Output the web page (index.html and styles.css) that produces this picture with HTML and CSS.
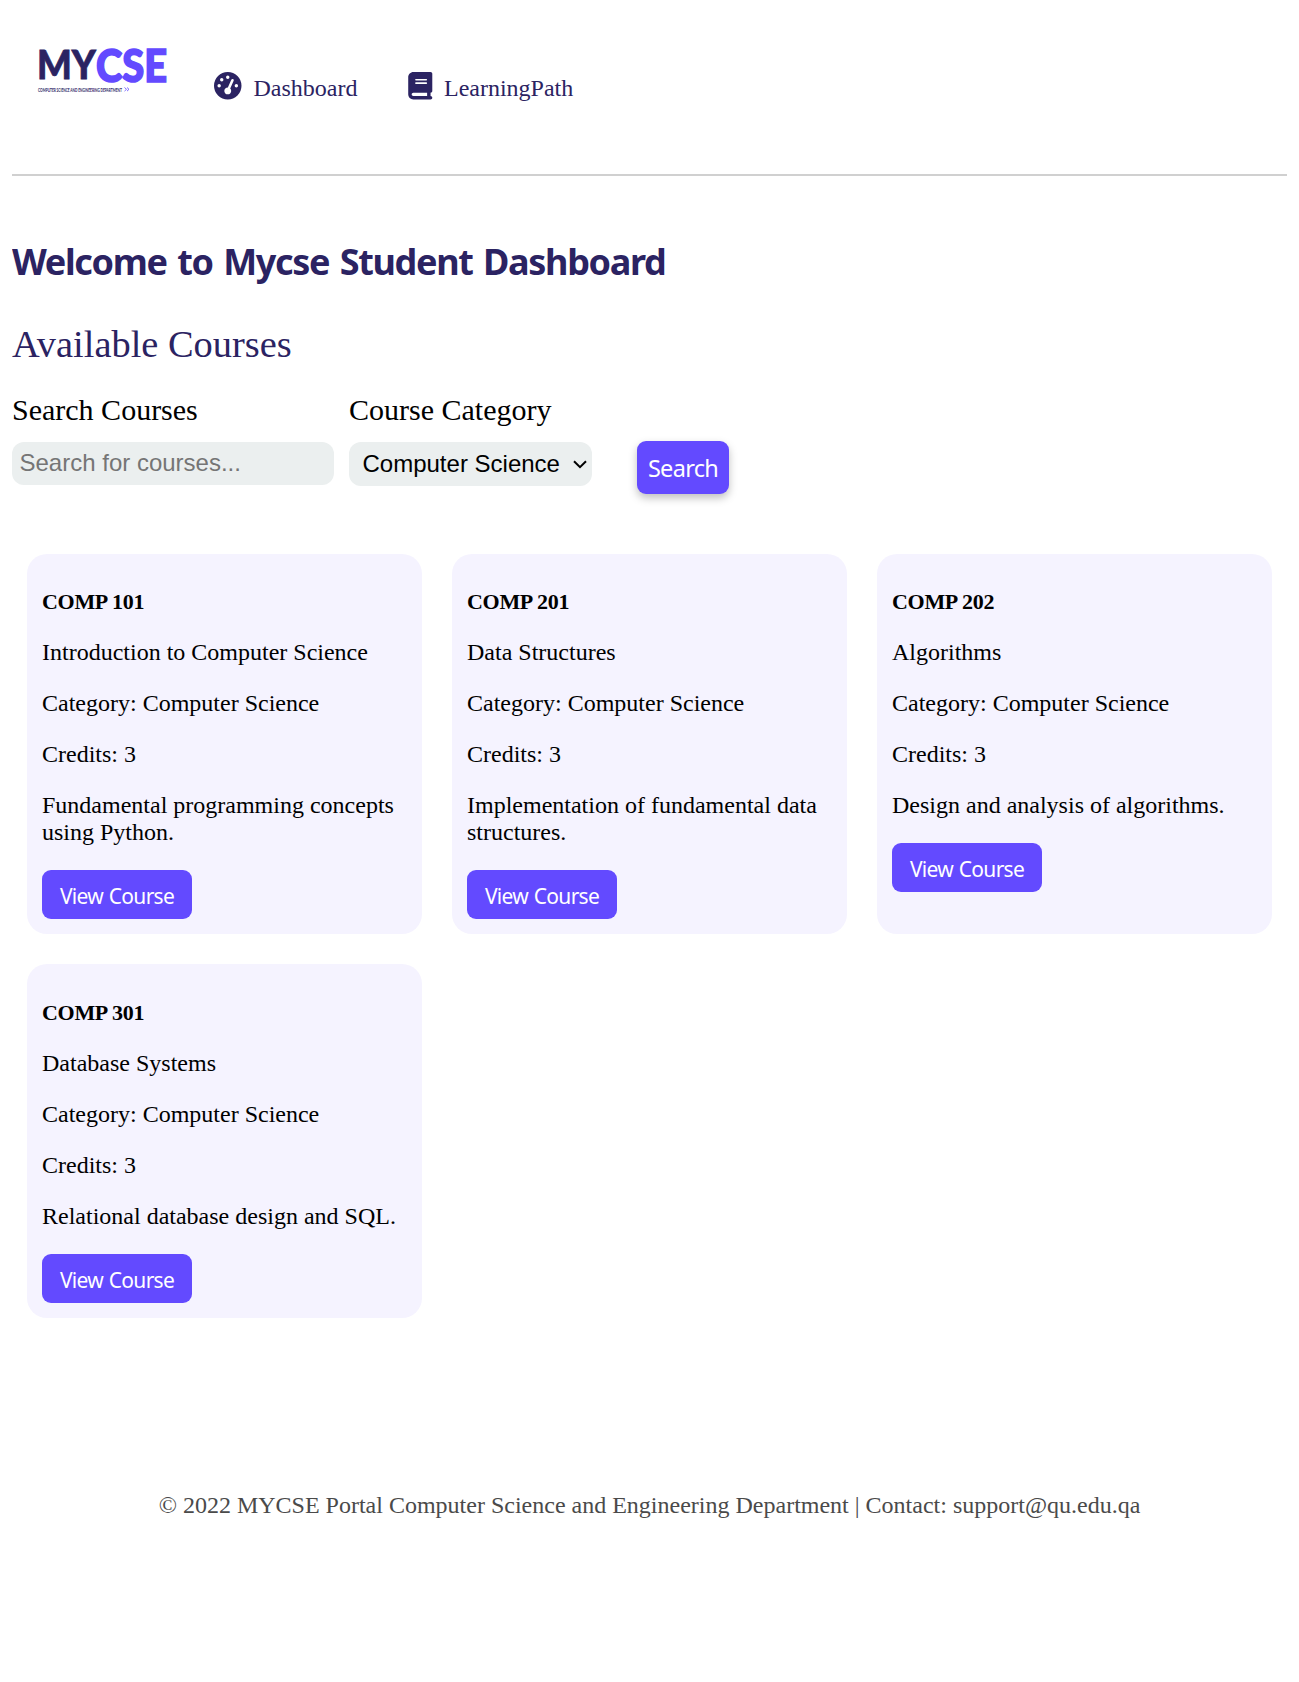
FILE: index.html
```html
<!DOCTYPE html>
<html lang="en">
<head>
<meta charset="utf-8">
<title>MYCSE Portal</title>
<link rel="stylesheet" href="styles.css">
</head>
<body>
<header class="header">
  <svg class="logo" viewBox="0 0 140 50" role="img" aria-label="MYCSE">
    <text class="logo-my" x="4" y="36" textLength="59" lengthAdjust="spacingAndGlyphs">MY</text>
    <text class="logo-cse" x="63" y="39" textLength="71" lengthAdjust="spacingAndGlyphs">CSE</text>
    <text class="logo-sub" x="5" y="48.5" textLength="84" lengthAdjust="spacingAndGlyphs">COMPUTER SCIENCE AND ENGINEERING DEPARTMENT</text>
    <path class="logo-mark" d="M91.500 44.500l2 1.800-2 1.800M94 44.500l2 1.800-2 1.800"/>
  </svg>
  <nav class="nav">
    <a class="nav-link">
      <svg class="icon icon-gauge" viewBox="0 0 512 512"><path d="M0 256a256 256 0 1 1 512 0A256 256 0 1 1 0 256zM288 96a32 32 0 1 0-64 0 32 32 0 1 0 64 0zM256 416c35.300 0 64-28.700 64-64 0-17.400-6.900-33.100-18.100-44.600L366 161.700c5.300-12.100-.2-26.300-12.300-31.600s-26.300.2-31.600 12.300L257.900 288c-.6 0-1.300 0-1.900 0-35.300 0-64 28.700-64 64s28.700 64 64 64zM176 144a32 32 0 1 0-64 0 32 32 0 1 0 64 0zM96 288a32 32 0 1 0 0-64 32 32 0 1 0 0 64zm352-32a32 32 0 1 0-64 0 32 32 0 1 0 64 0z"/></svg>
      <span>Dashboard</span>
    </a>
    <a class="nav-link">
      <svg class="icon icon-book" viewBox="0 0 448 512"><path d="M96 0C43 0 0 43 0 96v320c0 53 43 96 96 96h320c17.700 0 32-14.300 32-32s-14.300-32-32-32v-64c17.700 0 32-14.300 32-32V32c0-17.700-14.300-32-32-32H96zm0 384h256v64H96c-17.700 0-32-14.300-32-32s14.300-32 32-32zm32-240c0-8.800 7.200-16 16-16h192c8.800 0 16 7.200 16 16s-7.200 16-16 16H144c-8.800 0-16-7.200-16-16zm16 48h192c8.800 0 16 7.200 16 16s-7.200 16-16 16H144c-8.800 0-16-7.200-16-16s7.200-16 16-16z"/></svg>
      <span>LearningPath</span>
    </a>
  </nav>
</header>
<main>
  <h1 class="title">Welcome to Mycse Student Dashboard</h1>
  <h2 class="subtitle">Available Courses</h2>
  <form class="search">
    <div class="field">
      <label class="label" for="q">Search Courses</label>
      <input class="input" id="q" type="text" placeholder="Search for courses...">
    </div>
    <div class="field">
      <label class="label" for="cat">Course Category</label>
      <div class="select" id="cat">
        <span>Computer Science</span>
        <svg class="chevron" viewBox="0 0 14 9"><path d="M1 1.200l6 6 6-6"/></svg>
      </div>
    </div>
    <button class="search-button" type="button">Search</button>
  </form>
  <section class="courses">
    <article class="card">
      <h4 class="code">COMP 101</h4>
      <p>Introduction to Computer Science</p>
      <p>Category: Computer Science</p>
      <p>Credits: 3</p>
      <p>Fundamental programming concepts using Python.</p>
      <button class="view" type="button">View Course</button>
    </article>
    <article class="card">
      <h4 class="code">COMP 201</h4>
      <p>Data Structures</p>
      <p>Category: Computer Science</p>
      <p>Credits: 3</p>
      <p>Implementation of fundamental data structures.</p>
      <button class="view" type="button">View Course</button>
    </article>
    <article class="card">
      <h4 class="code">COMP 202</h4>
      <p>Algorithms</p>
      <p>Category: Computer Science</p>
      <p>Credits: 3</p>
      <p>Design and analysis of algorithms.</p>
      <button class="view" type="button">View Course</button>
    </article>
    <article class="card">
      <h4 class="code">COMP 301</h4>
      <p>Database Systems</p>
      <p>Category: Computer Science</p>
      <p>Credits: 3</p>
      <p>Relational database design and SQL.</p>
      <button class="view" type="button">View Course</button>
    </article>
  </section>
</main>
<footer class="footer">© 2022 MYCSE Portal Computer Science and Engineering Department | Contact: support@qu.edu.qa</footer>
</body>
</html>
```
FILE: styles.css
```css
* { box-sizing: border-box; }
body {
  margin: 0 12px;
  background: #fff;
  color: #000;
  font-family: "Liberation Serif", "Times New Roman", serif;
  font-size: 24px;
  line-height: 27px;
}
.header {
  display: flex;
  align-items: flex-start;
  height: 176px;
  padding: 43px 0 0 21px;
  border-bottom: 2px solid #d0d0d0;
}
.logo { width: 140px; height: 50px; overflow: visible; }
.logo text { font-family: Lato, sans-serif; font-weight: 900; }
.logo-my { font-size: 39px; fill: #2b2362; stroke: #2b2362; stroke-width: .8; }
.logo-cse { font-size: 45px; fill: #634aff; stroke: #634aff; stroke-width: 1.6; }
.logo .logo-sub { font-size: 5.500px; font-weight: 700; fill: #2b2362; }
.logo-mark { fill: none; stroke: #634aff; stroke-width: .8; }
.nav { display: flex; gap: 51px; margin: 29px 0 0 41px; color: #2b2362; }
.nav-link { display: flex; align-items: flex-start; }
.nav-link span { padding-top: 3px; }
.icon { height: 27.500px; fill: currentColor; }
.icon-gauge { width: 27.500px; margin-right: 12px; }
.icon-book { width: 24.500px; margin-right: 11px; }
.title {
  margin: 62px 0 0;
  color: #2b2362;
  font: bold 36px/48px "Noto Sans", sans-serif;
  letter-spacing: -1.330px;
  word-spacing: 2.500px;
  white-space: nowrap;
}
.subtitle {
  margin: 36px 0 0;
  color: #2b2362;
  font-size: 38.400px;
  font-weight: 400;
  line-height: 44px;
}
.search { display: flex; align-items: flex-start; margin-top: 27px; }
.field { margin-right: 15px; }
.label { display: block; font-size: 30px; line-height: 34px; margin-bottom: 15px; }
.input, .select {
  border: 0;
  border-radius: 12px;
  background: #ebefef;
  font: 24px/28px "Liberation Sans", Arial, sans-serif;
}
.input { display: block; width: 322px; height: 43px; padding: 0 7.500px 2px; }
.input::placeholder { color: #757575; opacity: 1; }
.select {
  display: flex;
  align-items: center;
  justify-content: space-between;
  width: 243px;
  height: 44px;
  padding: 0 5px 0 13.500px;
}
.chevron { width: 14px; height: 9px; fill: none; stroke: #000; stroke-width: 2; }
.search-button, .view {
  border: 0;
  background: #634aff;
  color: #fff;
  font-family: "Noto Sans", sans-serif;
  white-space: nowrap;
}
.search-button {
  width: 92px;
  height: 53px;
  margin: 48px 0 0 30px;
  padding: 1px 0 0;
  border-radius: 9px;
  font-size: 23.500px;
  letter-spacing: -.7px;
  box-shadow: 0 4px 8px rgba(0, 0, 0, .25);
}
.courses {
  display: grid;
  grid-template-columns: repeat(3, 1fr);
  gap: 30px;
  margin: 60px 15px 0;
}
.card { padding: 15px; border-radius: 20px; background: #f5f3ff; }
.card p { margin: 0 0 24px; }
.code { margin: 20.300px 0 25.200px; font-size: 22px; line-height: 25px; letter-spacing: -.3px; }
.view {
  display: block;
  width: 150px;
  height: 49px;
  padding: 3px 0 0;
  border-radius: 9px;
  font-size: 21px;
  letter-spacing: -.7px;
  word-spacing: 1px;
}
.footer { margin-top: 174px; text-align: center; color: #4a4a4a; }
```
